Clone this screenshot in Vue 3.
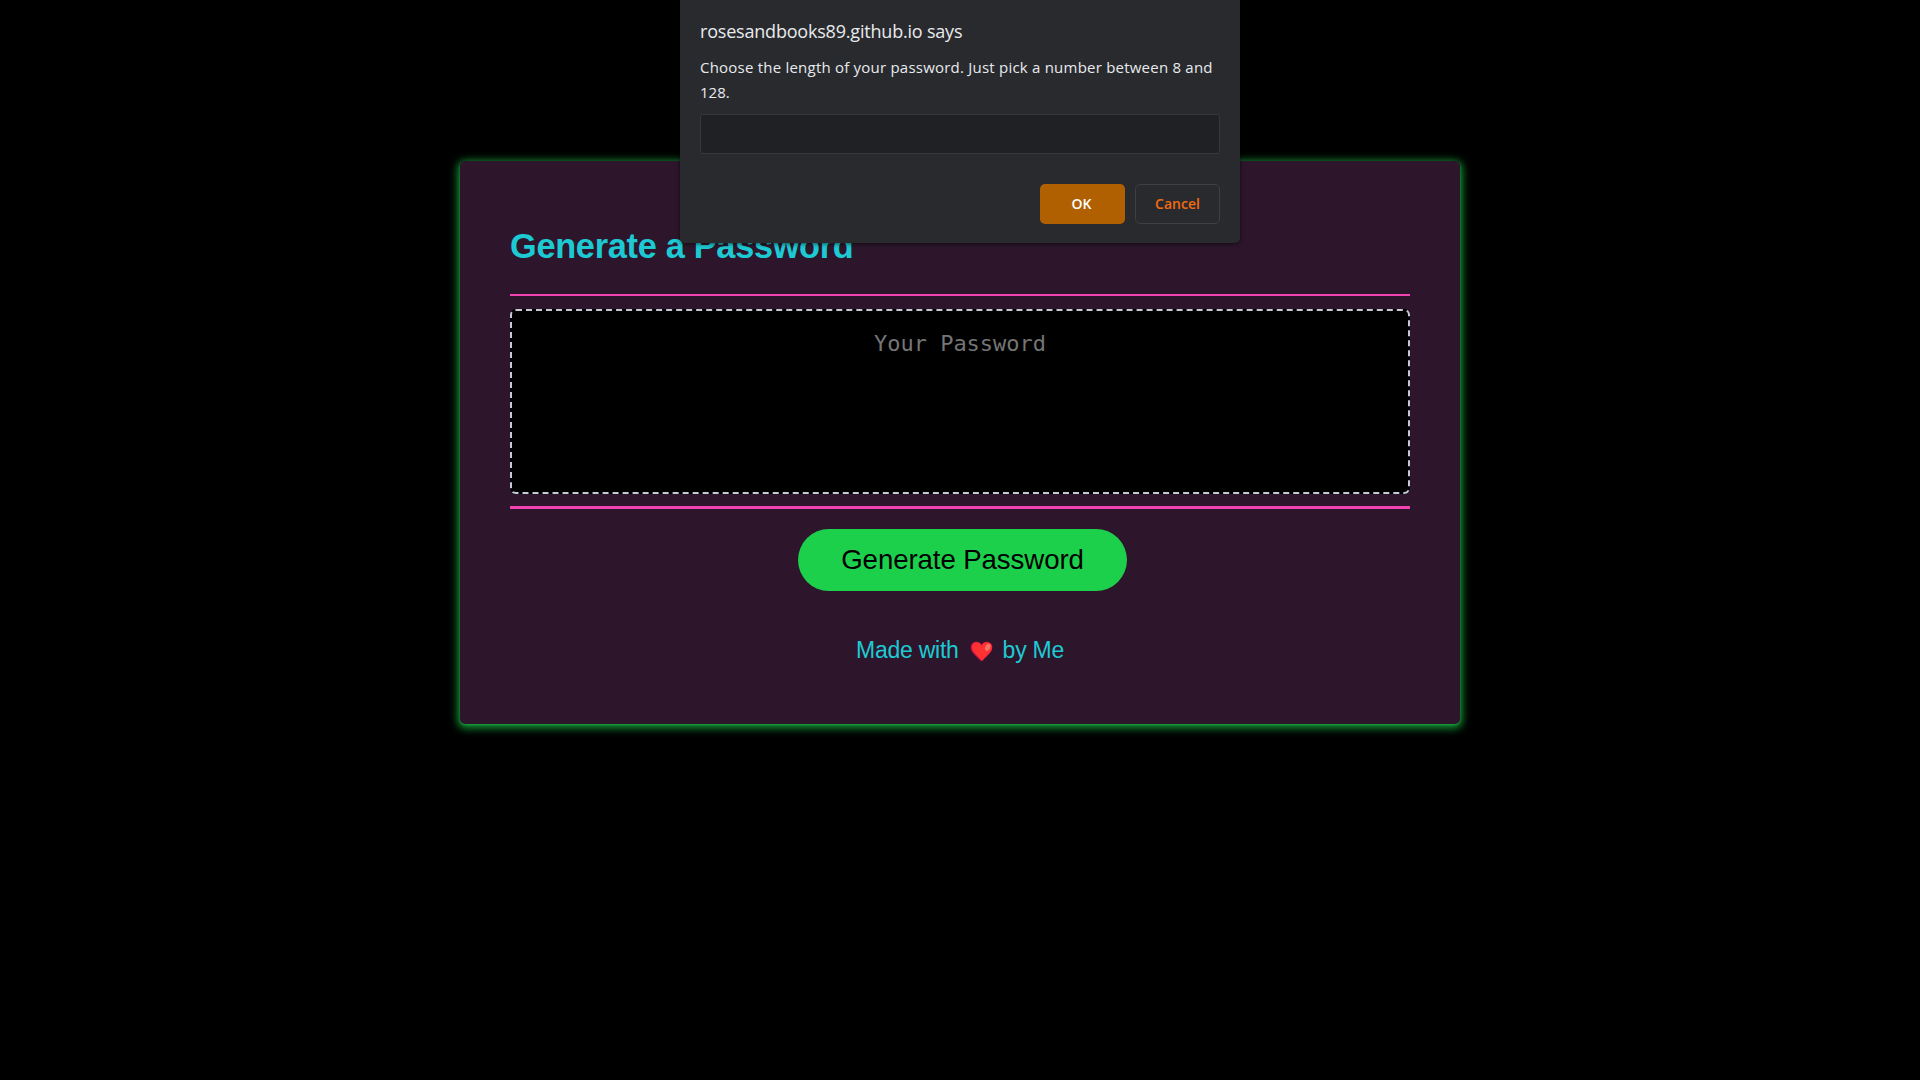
<script setup>
const host = 'rosesandbooks89.github.io'
</script>

<template>
  <div class="page">
    <main class="card">
      <header class="card-header"><h2>Generate a Password</h2></header>
      <section class="card-body">
        <textarea class="password" readonly placeholder="Your Password" aria-label="Generated Password"></textarea>
      </section>
      <div class="card-footer"><button class="generate">Generate Password</button></div>
      <footer class="credit">
        <span class="made">Made with</span>
        <svg class="heart" viewBox="0 0 24 22" aria-hidden="true">
          <path d="M12 21.3C10.7 20.2 8 17.7 5.2 14.8C2.3 11.9.6 9.7.6 6.8C.6 3.2 3.2.8 6.5.8C9 .8 11 2.1 12 4C13 2.1 15 .8 17.5.8C20.8.8 23.4 3.2 23.4 6.8C23.4 9.7 21.7 11.9 18.8 14.8C16 17.7 13.3 20.2 12 21.3Z" fill="#ca0b4a" />
          <path d="M12.6 20.7C11.4 19.6 9.3 17.4 6.8 14.9C3.8 12 2 9.7 2 6.8C2 3.4 4.2 1.3 7 1.3C9.4 1.3 11.2 2.6 12.2 4.8C13.2 2.4 15.1 1.2 17.4 1.2C20.6 1.2 23 3.4 23 6.8C23 9.6 21.3 11.7 18.5 14.5C16.2 16.9 14 19.4 12.6 20.7Z" fill="#fc3131" />
          <ellipse cx="18.6" cy="6.6" rx="2.5" ry="4" transform="rotate(30 18.6 6.6)" fill="#f37366" />
        </svg>
        <span>by Me</span>
      </footer>
    </main>

    <div class="dialog" role="dialog">
      <div class="title">{{ host }} says</div>
      <p class="message"><span>Choose the length of your password. Just pick a number between 8 and</span><br><span class="num">128.</span></p>
      <input class="answer" type="text" aria-label="Password length">
      <div class="actions">
        <button class="ok">OK</button>
        <button class="cancel">Cancel</button>
      </div>
    </div>
  </div>
</template>

<style>
body {
  background: #000;
}
</style>

<style scoped>
.page {
  display: flex;
  justify-content: center;
  box-sizing: border-box;
  height: 1080px;
  padding-top: 161px;
  overflow: hidden;
  background: #000;
  font-family: "Liberation Sans", Arial, sans-serif;
}
.card {
  box-sizing: border-box;
  width: 1000px;
  height: 563px;
  padding: 0 50px;
  display: flex;
  flex-direction: column;
  border-radius: 5px;
  background: #2d162c;
  box-shadow: 0 1px 2px 0 rgba(29, 208, 76, 0.45), 0 2px 8px 2px rgba(29, 208, 76, 0.75);
  color: #1dcad3;
}
.card-header {
  height: 133px;
  border-bottom: 2px solid #f243b2;
}
h2 {
  margin: 66px 0 0;
  font-size: 34.3px;
  line-height: 39px;
  font-weight: 700;
  letter-spacing: -0.28px;
}
.card-body {
  padding: 13px 0 12px;
  display: flex;
}
.password {
  box-sizing: border-box;
  width: 100%;
  height: 185px;
  padding: 19px 20px 20px;
  border: 2px dashed #c5cad6;
  border-radius: 6px;
  background: #000;
  color: #757575;
  font: 22px/27px "DejaVu Sans Mono", monospace;
  text-align: center;
  resize: none;
  outline: none;
  overflow: hidden;
}
.password::placeholder {
  color: #757575;
}
.card-footer {
  display: flex;
  padding: 20px 0 0 288px;
  border-top: 3px solid #f243b2;
}
button {
  padding: 0;
  border: 0;
}
.generate {
  width: 329px;
  height: 62px;
  border-radius: 31px;
  background: #1dd04c;
  color: #000;
  font: 27.65px/62px "Liberation Sans", Arial, sans-serif;
  letter-spacing: -0.1px;
}
.credit {
  display: flex;
  align-items: center;
  justify-content: center;
  margin-top: 44px;
  height: 30px;
  font-size: 23px;
  line-height: 30px;
  letter-spacing: -0.25px;
}
.heart {
  width: 23px;
  height: 21px;
  margin: 2px 10px 0 11px;
}
.dialog {
  position: absolute;
  top: 0;
  left: 680px;
  box-sizing: border-box;
  width: 560px;
  height: 243px;
  padding: 17px 20px 0;
  border-radius: 0 0 5px 5px;
  background: #292a2d;
  box-shadow: 0 1px 4px rgba(0, 0, 0, 0.6);
  color: #e8eaed;
  font-family: "Open Sans", "Noto Sans", sans-serif;
}
.title {
  height: 28px;
  font-size: 18px;
  line-height: 28px;
  letter-spacing: -0.2px;
  white-space: nowrap;
}
.message {
  margin: 10px 0 9px;
  height: 50px;
  font-size: 15px;
  line-height: 25px;
  letter-spacing: 0.22px;
  white-space: nowrap;
}
.num {
  letter-spacing: 0;
}
.answer {
  box-sizing: border-box;
  display: block;
  width: 520px;
  height: 40px;
  border: 1px solid #37383c;
  border-radius: 3px;
  background: #202124;
  outline: none;
}
.actions {
  display: flex;
  justify-content: flex-end;
  gap: 10px;
  margin-top: 30px;
}
.actions button {
  box-sizing: border-box;
  width: 85px;
  height: 40px;
  border-radius: 5px;
  font: 600 14px/38px "Open Sans", "Noto Sans", sans-serif;
}
.actions .ok {
  padding-right: 2px;
  background: #b06000;
  color: #fff;
}
.actions .cancel {
  border: 1px solid #3c4043;
  background: transparent;
  color: #f26c12;
}
</style>
